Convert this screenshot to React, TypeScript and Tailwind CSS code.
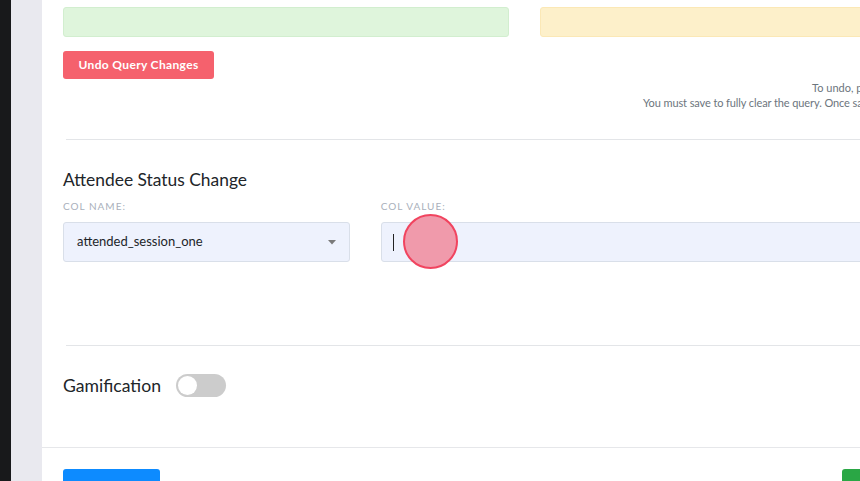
import React from "react";

export default function App() {
  const font = { fontFamily: '"Source Sans Pro", Lato, "Noto Sans", sans-serif' };
  return (
    <div className="w-[860px] h-[481px] overflow-hidden flex bg-white text-[#212529]" style={font}>
      <div className="w-[11px] shrink-0 bg-[#18191b]" />
      <div className="w-[31px] shrink-0 bg-[#e9e9ef]" />
      <div className="w-[964px] shrink-0 flex flex-col">
        <div className="px-[21px] pt-[7px] flex flex-col">
          <div className="grid grid-cols-2 gap-[31px]">
            <div className="h-[30px] rounded-[3px] bg-[#dff5dc] border border-[#d2eecf]" />
            <div className="h-[30px] rounded-[3px] bg-[#fdf0ca] border border-[#fbe8b6]" />
          </div>
          <div className="flex justify-between mt-[14px]">
            <button className="h-[28px] w-[151px] rounded-[3px] bg-[#f5616d] text-white text-[12px] font-bold tracking-[0.35px]">
              Undo Query Changes
            </button>
          </div>
          <div className="flex flex-col items-end text-[11px] leading-[15px] text-[#6c757d] mt-[1px] pr-[3px]">
            <div>To undo, press the undo link above.</div>
            <div className="tracking-[-0.1px]">You must save to fully clear the query. Once saved, it cannot be undone.</div>
          </div>
          <div className="ml-[3px] mt-[29px] border-t border-[#e3e5e8]" />
          <div className="mt-[29px] text-[17.4px] leading-[22px]">Attendee Status Change</div>
          <div className="grid grid-cols-3 gap-[31px] mt-[8px]">
            <div className="flex flex-col">
              <div className="text-[10px] leading-[14px] tracking-[1px] text-[#a9b0bb]">COL NAME:</div>
              <div className="mt-[9px] h-[40px] rounded-[3px] bg-[#eef2fd] border border-[#d9dfe9] flex items-center justify-between px-[13px]">
                <span className="text-[13px]">attended_session_one</span>
                <svg width="8" height="5" viewBox="0 0 8 5">
                  <path d="M0 0 L8 0 L4 4.5 Z" fill="#7a7a7a" />
                </svg>
              </div>
            </div>
            <div className="col-span-2 flex flex-col">
              <div className="text-[10px] leading-[14px] tracking-[1px] text-[#a9b0bb]">COL VALUE:</div>
              <div className="relative mt-[9px] h-[40px] rounded-[3px] bg-[#eef2fd] border border-[#d9dfe9] flex items-center px-[11px]">
                <span className="w-[1px] h-[17px] bg-[#222]" />
                <span className="absolute left-[21px] top-[-9px] w-[55px] h-[55px] rounded-full bg-[#f09aab] border-2 border-[#f1445f]" />
              </div>
            </div>
          </div>
          <div className="ml-[3px] mt-[83px] border-t border-[#e3e5e8]" />
          <div className="mt-[28px] flex items-center gap-[15px]">
            <span className="text-[17.6px] leading-[22px]">Gamification</span>
            <span className="w-[50px] h-[23px] rounded-full bg-[#cccccc] flex items-center pl-[2px]">
              <span className="w-[19px] h-[19px] rounded-full bg-white" />
            </span>
          </div>
        </div>
        <div className="mt-[50px] border-t border-[#e6e7ea]" />
        <div className="px-[21px] pt-[21px] flex justify-between">
          <button className="w-[97px] h-[36px] rounded-[3px] bg-[#0d8bff]" />
          <button className="w-[143px] h-[36px] rounded-[3px] bg-[#2aa745]" />
        </div>
      </div>
    </div>
  );
}
